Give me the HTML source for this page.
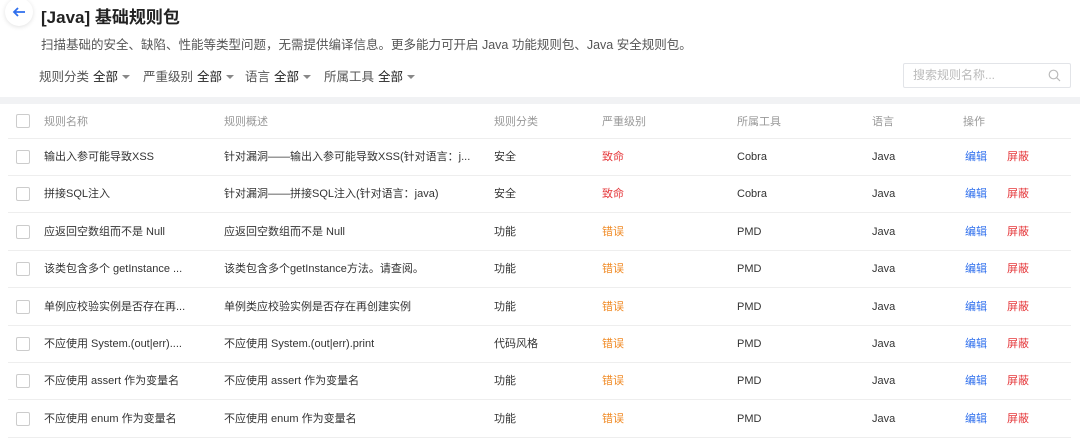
<!DOCTYPE html><html><head><meta charset="utf-8"><style>
body{margin:0;width:1080px;height:441px;overflow:hidden;background:#fff;font-family:"Liberation Sans","Noto Sans CJK SC",sans-serif;color:#333;}
.a{position:absolute;white-space:nowrap}
.back{position:absolute;left:5px;top:-2px;width:28px;height:28px;border-radius:50%;box-shadow:0 1px 5px rgba(0,0,0,.12);background:#fff}
.f{font-size:12.5px;color:#555}
.f b{font-weight:normal;color:#222;margin-left:4px}
.tri{display:inline-block;border:4px solid transparent;border-top:4px solid #888;border-bottom:0;margin-left:4px;vertical-align:2px}
.band{position:absolute;left:0;top:97px;width:1080px;height:7px;background:#f1f2f4}
.row{position:absolute;left:8px;width:1063px;height:37px;line-height:37px;border-bottom:1px solid #eee;font-size:11px;color:#333}
.row span{position:absolute;top:1px;white-space:nowrap}
.cb{position:absolute;left:8px;top:12px;width:12px;height:12px;border:1px solid #ccc;border-radius:2px}
.h{color:#999}
</style></head><body>
<div class="back"><svg width="28" height="28" viewBox="0 0 28 28"><path d="M20 14H9M13 10l-4 4 4 4" stroke="#2f6fed" stroke-width="1.8" fill="none"/></svg></div>
<div class="a" style="left:41px;top:3px;font-size:17px;font-weight:bold;color:#222">[Java] 基础规则包</div>
<div class="a" style="left:41px;top:34px;font-size:12.5px;color:#555">扫描基础的安全、缺陷、性能等类型问题，无需提供编译信息。更多能力可开启 Java 功能规则包、Java 安全规则包。</div>
<div class="a f" style="left:39px;top:66px">规则分类<b>全部</b><i class="tri"></i></div>
<div class="a f" style="left:143px;top:66px">严重级别<b>全部</b><i class="tri"></i></div>
<div class="a f" style="left:245px;top:66px">语言<b>全部</b><i class="tri"></i></div>
<div class="a f" style="left:324px;top:66px">所属工具<b>全部</b><i class="tri"></i></div>
<div class="a" style="left:903px;top:63px;width:166px;height:23px;border:1px solid #e2e4e8;border-radius:2px;font-size:12px;color:#bbb;line-height:23px;text-indent:9px">搜索规则名称...<svg style="position:absolute;right:9px;top:5px" width="13" height="13" viewBox="0 0 13 13"><circle cx="5.5" cy="5.5" r="4.3" stroke="#bbb" stroke-width="1.2" fill="none"/><path d="M8.7 8.7L12 12" stroke="#bbb" stroke-width="1.2"/></svg></div>
<div class="band"></div>
<div class="row h" style="top:104px;height:34px;line-height:34px"><i class="cb" style="top:10px"></i><span style="left:36px">规则名称</span><span style="left:216px">规则概述</span><span style="left:486px">规则分类</span><span style="left:594px">严重级别</span><span style="left:729px">所属工具</span><span style="left:864px">语言</span><span style="left:955px">操作</span></div>
<div id="rows"></div>
<script>
var d=[["输出入参可能导致XSS","针对漏洞——输出入参可能导致XSS(针对语言：j...","安全","致命","Cobra"],
["拼接SQL注入","针对漏洞——拼接SQL注入(针对语言：java)","安全","致命","Cobra"],
["应返回空数组而不是 Null","应返回空数组而不是 Null","功能","错误","PMD"],
["该类包含多个 getInstance ...","该类包含多个getInstance方法。请查阅。","功能","错误","PMD"],
["单例应校验实例是否存在再...","单例类应校验实例是否存在再创建实例","功能","错误","PMD"],
["不应使用 System.(out|err)....","不应使用 System.(out|err).print","代码风格","错误","PMD"],
["不应使用 assert 作为变量名","不应使用 assert 作为变量名","功能","错误","PMD"],
["不应使用 enum 作为变量名","不应使用 enum 作为变量名","功能","错误","PMD"]];
var h="";d.forEach(function(r,i){var c=r[3]=="致命"?"#e5383b":"#f08a24";
h+='<div class="row" style="top:'+(138+i*37.4)+'px"><i class="cb"></i><span style="left:36px">'+r[0]+'</span><span style="left:216px">'+r[1]+'</span><span style="left:486px">'+r[2]+'</span><span style="left:594px;color:'+c+'">'+r[3]+'</span><span style="left:729px">'+r[4]+'</span><span style="left:864px">Java</span><span style="left:957px;color:#2f6fed">编辑</span><span style="left:999px;color:#e5383b">屏蔽</span></div>';});
document.getElementById("rows").innerHTML=h;
</script>
</body></html>
